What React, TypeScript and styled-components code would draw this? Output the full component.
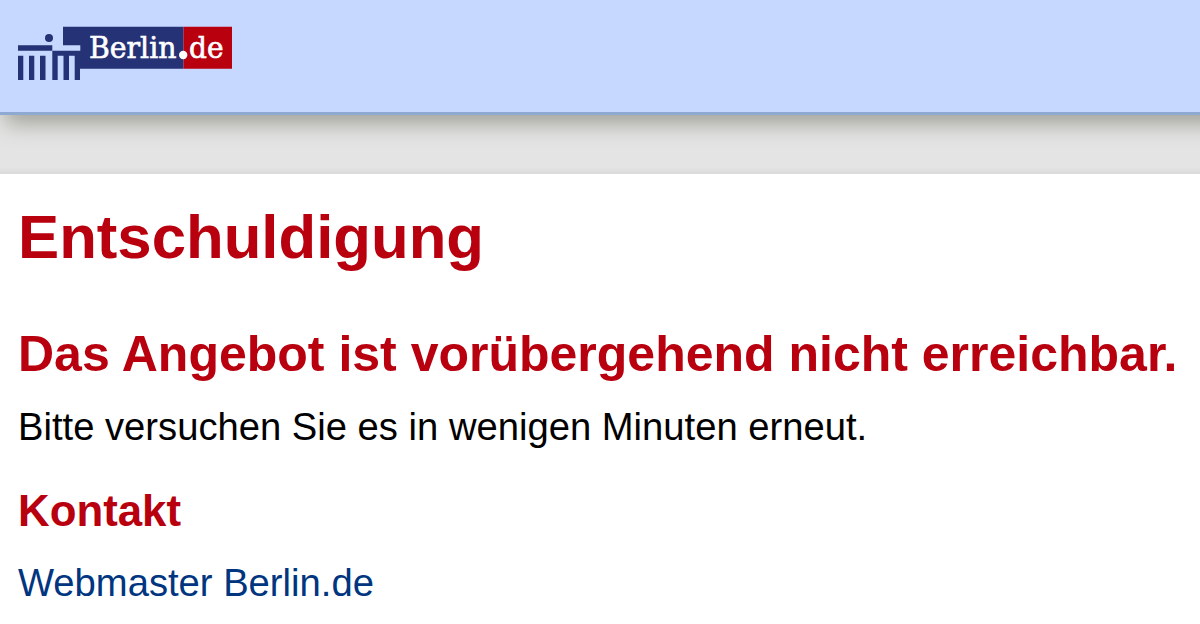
import React from 'react';
import styled, { createGlobalStyle } from 'styled-components';

const Global = createGlobalStyle`
  body { margin: 0; background: #fff; font-family: "Liberation Sans", Arial, sans-serif; color: #000; }
`;
const Page = styled.div`min-height: 624px; overflow: hidden;`;
const Header = styled.header`
  position: relative; box-sizing: border-box; height: 115px; margin-right: -24px; padding: 26px 18px 0;
  background: #c6d8ff; border-bottom: 3px solid #8ea9d2; box-shadow: 5px 9px 20px #a3a39b;
`;
const Logo = styled.svg`display: block; width: 214px; height: 54px;`;
const LogoText = styled.text`
  fill: #fff; stroke: #fff; stroke-width: 0.6px;
  font-family: "DejaVu Serif", serif; font-size: 30.5px; font-stretch: condensed;
`;
const Band = styled.div`height: 59px; background: linear-gradient(#e4e4e4 52px, #dadada);`;
const Main = styled.main`display: flex; flex-direction: column; padding: 26px 18px 0;`;
const Title = styled.h1`margin: 0; font-size: 61.7px; line-height: 74px; color: #b8000f; white-space: nowrap;`;
const Subtitle = styled.h2`margin: 51px 0 0; font-size: 50px; line-height: 58px; color: #b8000f; white-space: nowrap;`;
const Text = styled.p`margin: 22px 0 0; font-size: 38.2px; line-height: 44px; white-space: nowrap;`;
const Contact = styled.h3`margin: 37px 0 0; font-size: 43.8px; line-height: 50px; color: #b8000f;`;
const MailLink = styled.a`margin-top: 25px; font-size: 38.2px; line-height: 44px; color: #003580; text-decoration: none;`;

export default function App() {
  return (
    <Page>
      <Global />
      <Header>
        <Logo viewBox="0 0 214 54" aria-label="Berlin.de">
          <path fill="#253276" d="M45 .7H165.500V42.700H62V54H56.700V29.700H51V54H45.500V29.700H39.700V54H34.300V24.700H62.300V19.300H45Z" />
          <path fill="#b8000f" d="M165.500 .7H214V42.700H165.500Z" />
          <path fill="#253276" d="M0 19.300H34.300V24.700H0ZM0 29.700H5.300V54H0ZM11 29.700H16.300V54H11ZM22 29.700H27.500V54H22Z" />
          <circle cx="31" cy="12" r="4" fill="#253276" />
          <LogoText x="71" y="32.300" textLength="87.500" lengthAdjust="spacingAndGlyphs">Berlin</LogoText>
          <circle cx="165.200" cy="29" r="4.200" fill="#fff" />
          <LogoText x="171" y="32.300" textLength="34.500" lengthAdjust="spacingAndGlyphs">de</LogoText>
        </Logo>
      </Header>
      <Band />
      <Main>
        <Title>Entschuldigung</Title>
        <Subtitle>Das Angebot ist vorübergehend nicht erreichbar.</Subtitle>
        <Text>Bitte versuchen Sie es in wenigen Minuten erneut.</Text>
        <Contact>Kontakt</Contact>
        <MailLink>Webmaster Berlin.de</MailLink>
      </Main>
    </Page>
  );
}
